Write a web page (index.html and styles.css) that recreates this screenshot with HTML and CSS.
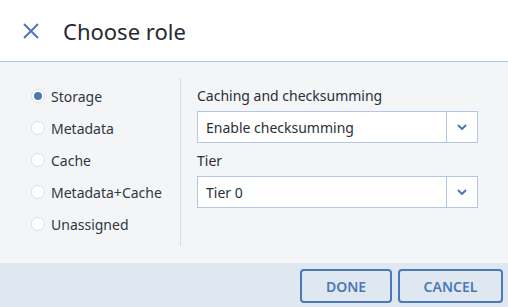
FILE: index.html
```html
<!DOCTYPE html>
<html>
<head>
<meta charset="utf-8">
<link rel="stylesheet" href="styles.css">
</head>
<body>
<div class="dialog">
  <header class="header">
    <svg class="close" width="18" height="18" viewBox="0 0 18 18"><path d="M2 2 L16 16 M16 2 L2 16" stroke="#4a78b8" stroke-width="2" fill="none"/></svg>
    <h1 class="title">Choose role</h1>
  </header>
  <main class="body">
    <div class="roles">
      <label class="role"><span class="radio checked"></span>Storage</label>
      <label class="role"><span class="radio"></span>Metadata</label>
      <label class="role"><span class="radio"></span>Cache</label>
      <label class="role"><span class="radio"></span>Metadata+Cache</label>
      <label class="role"><span class="radio"></span>Unassigned</label>
    </div>
    <div class="fields">
      <div class="label">Caching and checksumming</div>
      <div class="select"><span class="value">Enable checksumming</span><span class="arrow"><svg width="10" height="6" viewBox="0 0 10 6"><path d="M1 1 L5 5 L9 1" stroke="#4a78b8" stroke-width="2" fill="none"/></svg></span></div>
      <div class="label">Tier</div>
      <div class="select"><span class="value">Tier 0</span><span class="arrow"><svg width="10" height="6" viewBox="0 0 10 6"><path d="M1 1 L5 5 L9 1" stroke="#4a78b8" stroke-width="2" fill="none"/></svg></span></div>
    </div>
  </main>
  <footer class="footer">
    <button class="btn done">DONE</button>
    <button class="btn cancel">CANCEL</button>
  </footer>
</div>
</body>
</html>
```
FILE: styles.css
```css
* { box-sizing: border-box; }
html, body { margin: 0; padding: 0; }
body {
  font-family: "Noto Sans", "Open Sans", sans-serif;
  color: #2b2f36;
  width: 508px;
  height: 307px;
  overflow: hidden;
}
.dialog { display: flex; flex-direction: column; height: 307px; }
.header {
  height: 62px;
  background: #fff;
  border-bottom: 1px solid #a9c3e6;
  display: flex;
  align-items: center;
  padding-left: 22px;
}
.close { margin-right: 23px; }
.title {
  margin: 0;
  font-size: 22px;
  font-weight: 400;
  color: #262a30;
}
.body {
  flex: 1;
  background: #f3f5f7;
  display: flex;
  padding: 16px 0 0 0;
}
.roles {
  width: 181px;
  border-right: 1px solid #d9dde2;
  height: 168px;
  padding-left: 31px;
  padding-top: 2px;
}
.role {
  display: flex;
  align-items: center;
  height: 32px;
  font-size: 14px;
  color: #33373d;
}
.radio {
  width: 14px;
  height: 14px;
  border-radius: 50%;
  background: #fff;
  border: 1px solid #dde1e6;
  margin-right: 6px;
  display: flex;
  align-items: center;
  justify-content: center;
}
.radio.checked::after {
  content: "";
  width: 8px;
  height: 8px;
  border-radius: 50%;
  background: #4a78b8;
}
.fields {
  padding-left: 16px;
  padding-top: 8px;
  width: 297px;
}
.label {
  font-size: 14px;
  height: 20px;
  line-height: 20px;
  margin-bottom: 5px;
}
.select {
  height: 32px;
  background: #fff;
  border: 1px solid #b3c7e3;
  display: flex;
  margin-bottom: 8px;
  font-size: 14px;
}
.select .value { flex: 1; padding-left: 8px; display: flex; align-items: center; }
.select .arrow {
  width: 31px;
  border-left: 1px solid #b3c7e3;
  display: flex;
  align-items: center;
  justify-content: center;
}
.footer {
  height: 44px;
  background: #dfe8f1;
  display: flex;
  justify-content: flex-end;
  align-items: flex-start;
  padding: 6px 5px 0 0;
  gap: 6px;
}
.btn {
  height: 34px;
  border: 2px solid #4a78b8;
  border-radius: 4px;
  background: transparent;
  color: #4a78b8;
  font-family: "Noto Sans", sans-serif;
  font-size: 14px;
  font-weight: 600;
  padding: 0;
}
.done { width: 92px; }
.cancel { width: 105px; }
```
